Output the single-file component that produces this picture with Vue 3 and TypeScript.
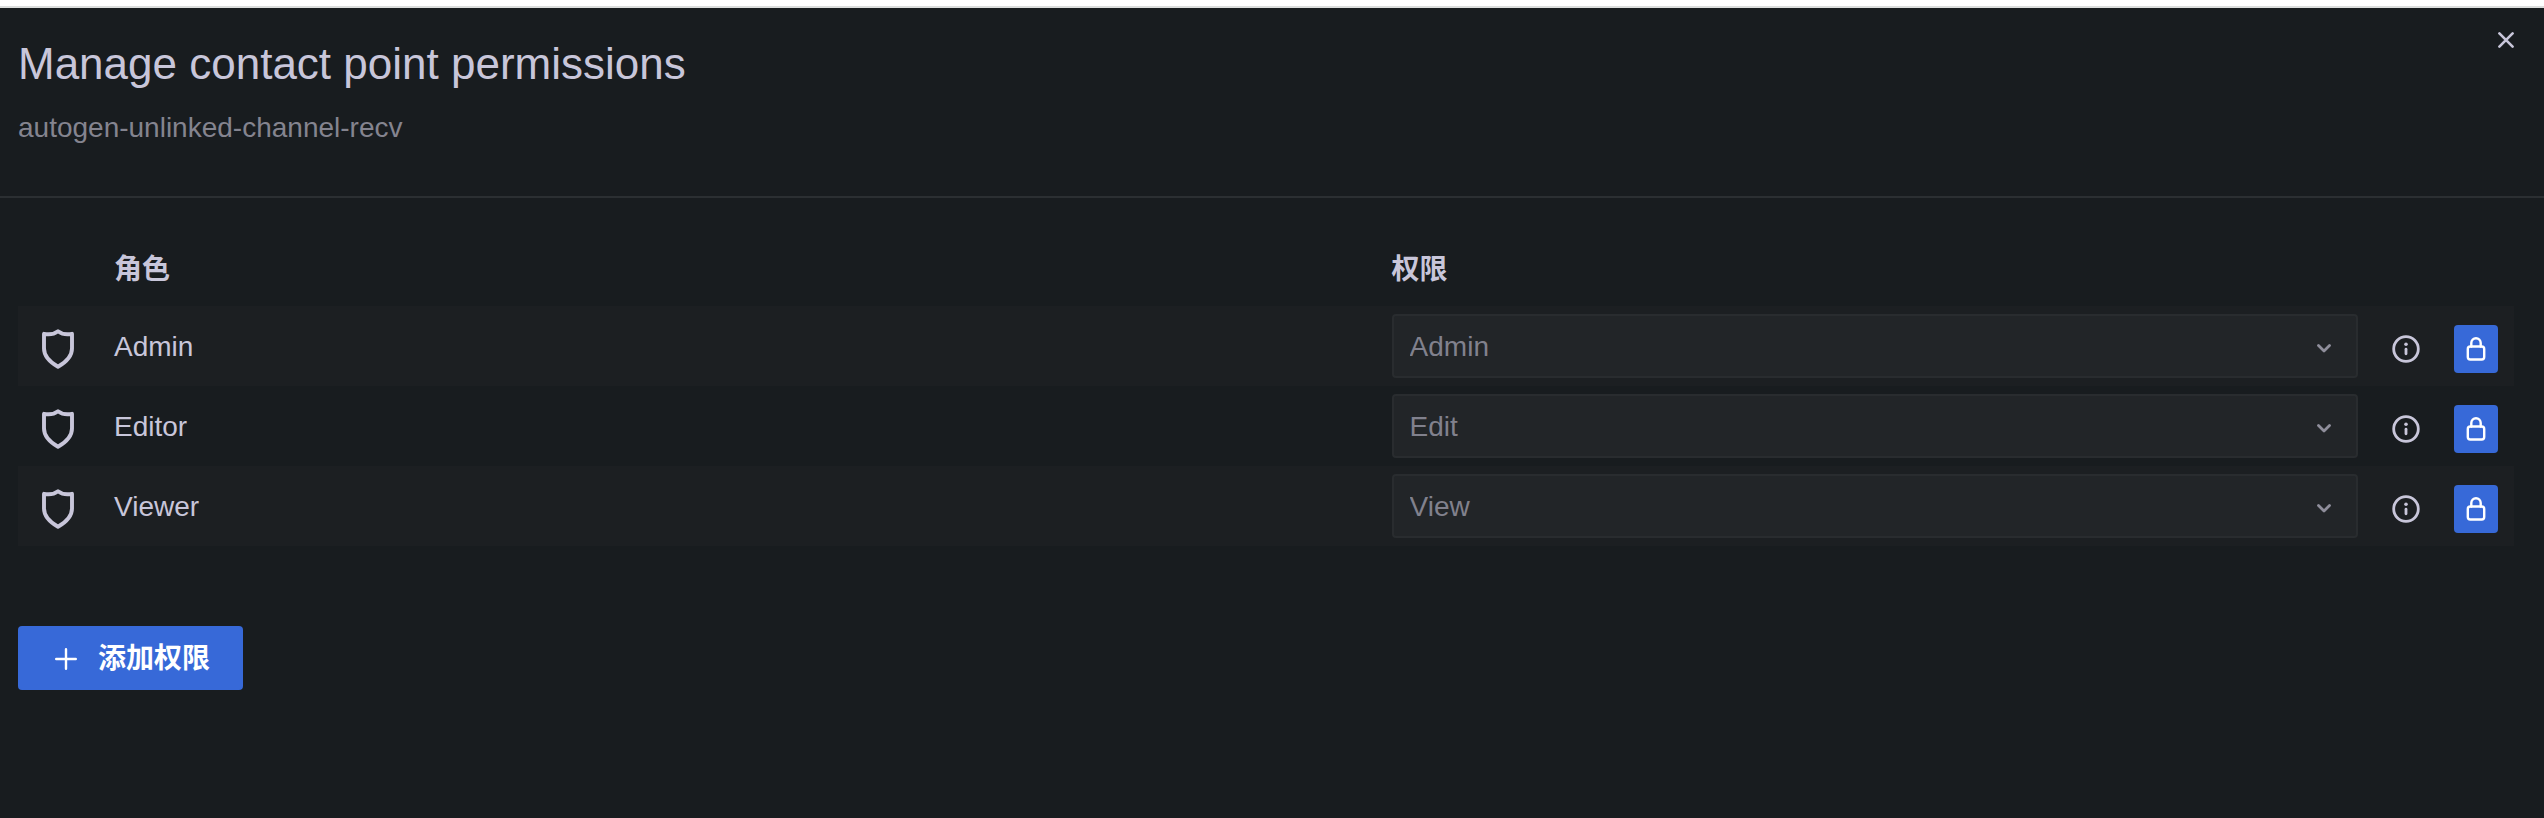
<script setup lang="ts">
import { ref } from 'vue'

interface RolePermission {
  role: string
  permission: string
}

const rows: RolePermission[] = [
  { role: 'Admin', permission: 'Admin' },
  { role: 'Editor', permission: 'Edit' },
  { role: 'Viewer', permission: 'View' },
]
const open = ref(true)
</script>

<template>
  <section v-if="open" class="drawer" aria-labelledby="drawer-title">
    <header class="drawer-header">
      <div class="headings">
        <h1 id="drawer-title">Manage contact point permissions</h1>
        <p class="subtitle">autogen-unlinked-channel-recv</p>
      </div>
      <button class="close" type="button" aria-label="Close" @click="open = false">
        <svg viewBox="0 0 16 16" width="16" height="16"><path d="M1.4 1.4l13.2 13.2M14.600 1.400L1.400 14.600" /></svg>
      </button>
    </header>

    <main class="content">
      <table class="permissions">
        <colgroup>
          <col class="col-icon" />
          <col />
          <col class="col-permission" />
          <col class="col-info" />
          <col class="col-lock" />
        </colgroup>
        <thead>
          <tr>
            <th></th>
            <th scope="col">角色</th>
            <th scope="col">权限</th>
            <th></th>
            <th></th>
          </tr>
        </thead>
        <tbody>
          <tr v-for="row in rows" :key="row.role">
            <td class="icon-cell">
              <svg class="shield" viewBox="0 0 32 40" width="32" height="40">
                <path d="M16 2.200C12.500 4.900 7.500 6 2 4.800V19.500C2 27 7 32.600 16 37.800C25 32.600 30 27 30 19.500V4.800C24.500 6 19.500 4.900 16 2.200Z" />
              </svg>
            </td>
            <td class="role-cell"><label :for="`permission-${row.role}`">{{ row.role }}</label></td>
            <td>
              <div class="select-box">
                <select :id="`permission-${row.role}`" disabled>
                  <option>{{ row.permission }}</option>
                </select>
                <svg class="chevron" viewBox="0 0 14 9" width="14" height="9"><path d="M1.500 1.500L7 7L12.500 1.500" /></svg>
              </div>
            </td>
            <td class="icon-cell">
              <svg class="info" viewBox="0 0 28 28" width="28" height="28">
                <circle cx="14" cy="14" r="12.300" />
                <path d="M14 14.200V18.800" />
                <circle class="dot" cx="14" cy="9.200" r="1.800" />
              </svg>
            </td>
            <td class="icon-cell">
              <button class="lock" type="button" disabled aria-label="Locked">
                <svg viewBox="0 0 20 24" width="20" height="24">
                  <rect x="1.800" y="9.500" width="16.400" height="13" rx="2.500" />
                  <path d="M5.300 9.500V6a4.700 4.700 0 0 1 9.400 0V9.500" />
                </svg>
              </button>
            </td>
          </tr>
        </tbody>
      </table>

      <button class="add" type="button">
        <svg viewBox="0 0 22 22" width="22" height="22"><path d="M11 1.200v19.600M1.200 11h19.600" /></svg>
        <span>添加权限</span>
      </button>
    </main>
  </section>
</template>

<style>
body {
  margin: 0;
  background: #181c1f;
}
</style>

<style scoped>
.drawer {
  box-sizing: border-box;
  min-height: 100vh;
  border-top: 6px solid #fff;
  background: #181c1f;
  color: #c8c6da;
  font-family: "Liberation Sans", "Noto Sans CJK SC", sans-serif;
  font-size: 28px;
  line-height: 40px;
}

svg {
  display: block;
  fill: none;
  stroke: currentColor;
  stroke-linecap: round;
  stroke-linejoin: round;
}

button {
  border: 0;
  padding: 0;
  font: inherit;
  color: inherit;
}

.drawer-header {
  display: flex;
  justify-content: space-between;
  align-items: flex-start;
  padding: 0 22px 48px 18px;
  border-top: 2px solid #dcdedd;
  border-bottom: 2px solid #2b2f32;
}

.headings {
  padding-top: 28px;
}

h1 {
  margin: 0;
  font-size: 44px;
  font-weight: 400;
  line-height: 56px;
}

.subtitle {
  margin: 16px 0 0;
  color: #84848f;
}

.close {
  display: grid;
  place-items: center;
  width: 32px;
  height: 32px;
  margin-top: 16px;
  background: none;
}

.close svg {
  stroke-width: 2.6;
}

.content {
  padding: 40px 30px 0 18px;
}

.permissions {
  width: 100%;
  table-layout: fixed;
  border-collapse: collapse;
}

.col-icon {
  width: 80px;
}

.col-permission {
  width: 40%;
}

.col-info {
  width: 64px;
}

.col-lock {
  width: 76px;
}

th,
td {
  box-sizing: border-box;
  padding: 0 16px;
  text-align: left;
  vertical-align: middle;
}

th {
  height: 68px;
  padding-bottom: 4px;
  font-weight: 700;
}

td {
  height: 80px;
}

td.role-cell {
  padding-top: 2px;
}

td.icon-cell {
  padding: 6px 0 0;
}

td.icon-cell:first-child {
  padding-right: 0;
}

tbody tr:nth-child(odd) {
  background: #1c1f22;
}

.icon-cell svg,
.icon-cell button {
  margin: 0 auto;
}

.shield {
  stroke-width: 3.900;
}

.select-box {
  position: relative;
}

select {
  display: block;
  box-sizing: border-box;
  width: 100%;
  height: 64px;
  padding: 2px 56px 0 16px;
  appearance: none;
  border: 2px solid #292c2f;
  border-radius: 4px;
  background: #222528;
  color: #81818d;
  font: inherit;
  opacity: 1;
}

.chevron {
  position: absolute;
  top: 30px;
  right: 27px;
  color: #8f8e9b;
  stroke-width: 2.800;
}

.info {
  stroke-width: 2.800;
}

.info .dot {
  fill: currentColor;
  stroke: none;
}

.lock {
  display: grid;
  place-items: center;
  width: 44px;
  height: 48px;
  border-radius: 4px;
  background: #3769d8;
  color: #fff;
}

.lock svg {
  stroke-width: 2.400;
}

.add {
  display: flex;
  align-items: center;
  gap: 21px;
  height: 64px;
  margin-top: 80px;
  padding: 2px 33px 0 37px;
  border-radius: 4px;
  background: #3769d8;
  color: #fff;
  font-weight: 700;
}

.add svg {
  stroke-width: 2.400;
}
</style>
